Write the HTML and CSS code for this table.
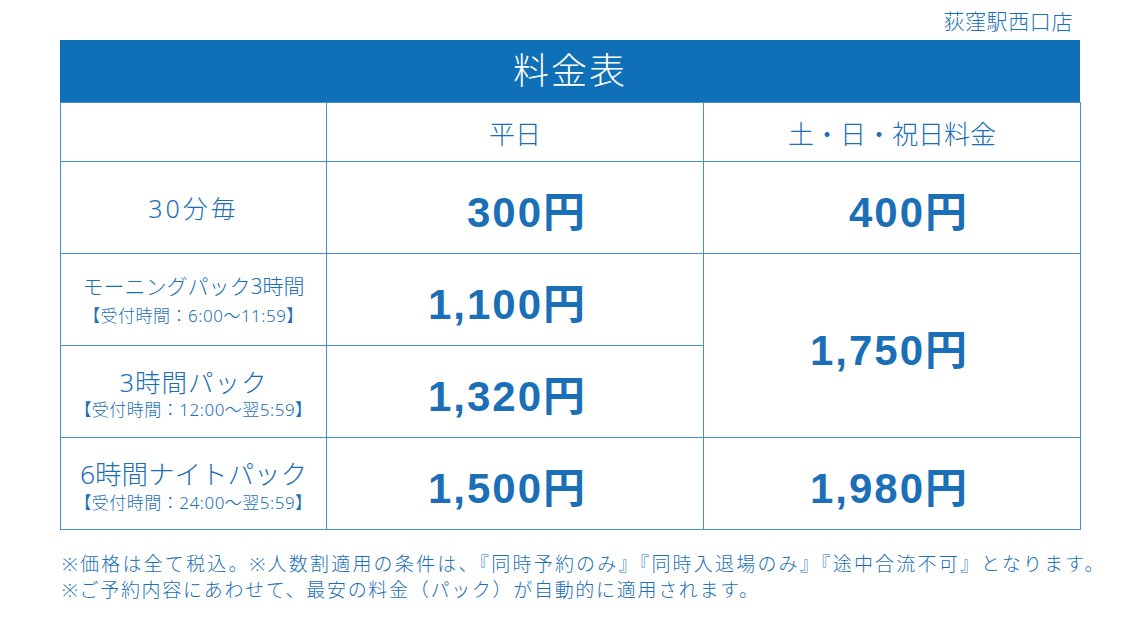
FILE: index.html
```html
<!DOCTYPE html>
<html lang="ja">
<head>
<meta charset="utf-8">
<link rel="stylesheet" href="styles.css">
</head>
<body>
<div class="page">
  <div class="store">荻窪駅西口店</div>
  <div class="title">料金表</div>
  <table class="price">
    <colgroup><col class="c1"><col class="c2"><col class="c3"></colgroup>
    <tr class="head"><td></td><td>平日</td><td>土・日・祝日料金</td></tr>
    <tr class="r"><td class="lbl"><span class="n1">30分毎</span></td><td class="amt a2">300円</td><td class="amt a3">400円</td></tr>
    <tr class="r"><td class="lbl"><span class="n2">モーニングパック3時間</span><span class="sub">【受付時間：6:00～11:59】</span></td><td class="amt a2">1,100円</td><td class="amt a3" rowspan="2">1,750円</td></tr>
    <tr class="r"><td class="lbl"><span class="n3">3時間パック</span><span class="sub">【受付時間：12:00～翌5:59】</span></td><td class="amt a2">1,320円</td></tr>
    <tr class="r"><td class="lbl"><span class="n4">6時間ナイトパック</span><span class="sub">【受付時間：24:00～翌5:59】</span></td><td class="amt a2">1,500円</td><td class="amt a3">1,980円</td></tr>
  </table>
  <div class="notes">
    <p class="l1">※価格は全て税込。※人数割適用の条件は、『同時予約のみ』『同時入退場のみ』『途中合流不可』となります。</p>
    <p class="l2">※ご予約内容にあわせて、最安の料金（パック）が自動的に適用されます。</p>
  </div>
</div>
</body>
</html>
```
FILE: styles.css
```css
* { box-sizing: border-box; }
html, body { margin: 0; padding: 0; background: #fff; }
body {
  font-family: "Noto Sans", "Noto Sans CJK JP", sans-serif;
  color: #1a6fb6;
}
.page { width: 1135px; height: 634px; padding: 0 0 0 60px; }
.store {
  width: 1020px;
  text-align: right;
  font-size: 21px;
  letter-spacing: 0.6px;
  line-height: 26px;
  padding: 8px 7px 0 0;
  height: 40px;
  font-weight: 300;
}
.title {
  width: 1020px;
  height: 62px;
  background: #0f6fb7;
  color: #fff;
  text-align: center;
  font-size: 36px;
  letter-spacing: 2px;
  line-height: 62px;
  font-weight: 300;
}
.price {
  width: 1020px;
  border-collapse: collapse;
  table-layout: fixed;
}
.c1 { width: 266px; }
.c2 { width: 377px; }
.c3 { width: 377px; }
.price td {
  border: 1px solid #4a90cc;
  text-align: center;
  vertical-align: middle;
  padding: 0;
}
.head td {
  height: 59px;
  font-size: 26px;
  font-weight: 300;
  padding-top: 2px;
}
.r td { height: 92px; }
.lbl span { display: block; font-weight: 300; }
.n1 { font-size: 25px; letter-spacing: 3px; padding-bottom: 2px; }
.n2 { font-size: 21px; line-height: 30px; padding-top: 0; padding-bottom: 3px; }
.n3 { font-size: 25.5px; letter-spacing: 1px; line-height: 32px; padding-top: 4px; }
.n4 { font-size: 26.5px; line-height: 34px; padding-top: 4px; }
.sub { font-size: 17px; line-height: 24px; letter-spacing: 0.5px; }
.amt {
  font-family: "Liberation Sans", "Noto Sans CJK JP", sans-serif;
  font-weight: 700;
  font-size: 42px;
  letter-spacing: 2px;
}
.price td.amt { padding-top: 2px; }
.price td.a2 { text-align: right; padding-right: 116px; }
.price td.a3 { text-align: right; padding-right: 111px; }
.notes { padding: 21px 0 0 2px; }
.notes p {
  margin: 0;
  font-size: 19px;
  line-height: 26px;
  font-weight: 300;
  white-space: nowrap;
}
.l1 { letter-spacing: 2.2px; }
.l2 { letter-spacing: 1.7px; }
```
